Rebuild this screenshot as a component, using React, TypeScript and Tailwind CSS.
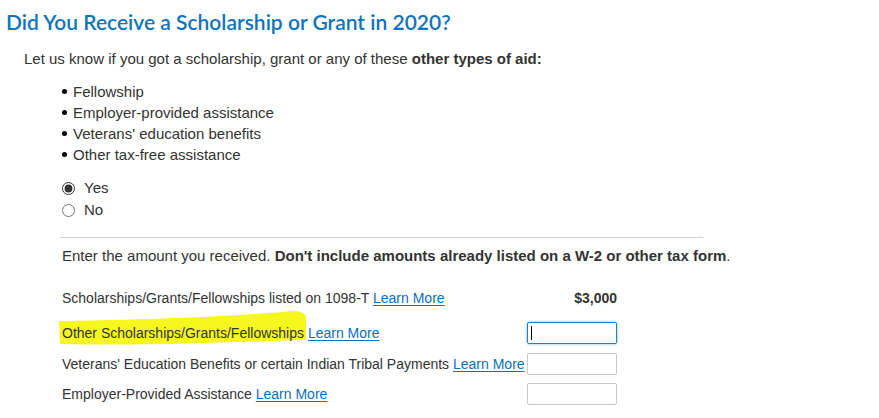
import { useState } from 'react'

const sans = { fontFamily: '"Liberation Sans", Arial, sans-serif' }

function LearnMore() {
  return (
    <a href="#" className="text-[#0a6fc2] underline underline-offset-2 decoration-1">
      Learn More
    </a>
  )
}

function Highlight() {
  return (
    <svg
      className="pointer-events-none absolute left-[-5px] top-[-14px]"
      width="262"
      height="40"
      viewBox="0 0 262 40"
    >
      <path
        d="M2 12 C 60 11, 150 9, 226 3 C 238 1, 247 2, 249 8 L 249 31 C 180 33, 90 37, 3 35 Z"
        fill="#f6f71e"
      />
    </svg>
  )
}

function AmountInput({ focused }: { focused?: boolean }) {
  const [value, setValue] = useState('')
  return (
    <span className="relative">
      <input
        value={value}
        onChange={(e) => setValue(e.target.value)}
        className={
          focused
            ? 'block h-[22px] w-[90px] rounded-[2px] border border-[#1f7fc4] bg-white px-1 text-sm shadow-[0_0_3px_#6fb3e6] outline-none'
            : 'block h-[22px] w-[90px] rounded-[2px] border border-[#c9c9c9] bg-white px-1 text-sm outline-none'
        }
      />
      {focused && value === '' && (
        <span className="pointer-events-none absolute left-[4px] top-[4px] h-[14px] w-px bg-black" />
      )}
    </span>
  )
}

export default function App() {
  const [aid, setAid] = useState<'yes' | 'no'>('yes')

  return (
    <div className="h-[418px] w-[879px] bg-white text-[15px] text-[#333]" style={sans}>
      <h1
        className="pl-[6px] pt-[7px] text-[21px] font-semibold leading-[30px] text-[#0d74bd]"
        style={{ fontFamily: 'Lato, "Open Sans", sans-serif' }}
      >
        Did You Receive a Scholarship or Grant in 2020?
      </h1>

      <p className="mt-[12px] pl-[24px] leading-[20px]">
        Let us know if you got a scholarship, grant or any of these <b>other types of aid:</b>
      </p>

      <ul className="mt-[12px] pl-[62px] leading-[21px]">
        {[
          'Fellowship',
          'Employer-provided assistance',
          "Veterans' education benefits",
          'Other tax-free assistance',
        ].map((t) => (
          <li key={t} className="flex items-center gap-[6px]">
            <span className="inline-block h-[5px] w-[5px] rounded-full bg-black" />
            {t}
          </li>
        ))}
      </ul>

      <div className="ml-[62px] mt-[12px] flex flex-col leading-[22px]">
        {(['yes', 'no'] as const).map((v) => (
          <label key={v} className="flex cursor-pointer items-center gap-[9px]">
            <input
              type="radio"
              name="aid"
              checked={aid === v}
              onChange={() => setAid(v)}
              className="m-0 h-[13px] w-[13px] accent-[#333]"
            />
            {v === 'yes' ? 'Yes' : 'No'}
          </label>
        ))}
      </div>

      <div className="ml-[60px] mt-[16px] w-[643px] border-t border-[#cfcfcf]" />

      <p className="ml-[62px] mt-[8px] leading-[20px]">
        Enter the amount you received.{' '}
        <b>Don't include amounts already listed on a W-2 or other tax form</b>.
      </p>

      <div className="ml-[62px] mt-[22px] flex w-[555px] flex-col text-[14px]">
        <div className="flex h-[20px] items-center justify-between">
          <span>
            Scholarships/Grants/Fellowships listed on 1098-T <LearnMore />
          </span>
          <b>$3,000</b>
        </div>
        <div className="mt-[14px] flex h-[22px] items-center justify-between">
          <span className="relative">
            <Highlight />
            <span className="relative">Other Scholarships/Grants/Fellowships</span> <LearnMore />
          </span>
          <AmountInput focused />
        </div>
        <div className="mt-[9px] flex h-[22px] items-center justify-between">
          <span>
            Veterans' Education Benefits or certain Indian Tribal Payments <LearnMore />
          </span>
          <AmountInput />
        </div>
        <div className="mt-[8px] flex h-[22px] items-center justify-between">
          <span>
            Employer-Provided Assistance <LearnMore />
          </span>
          <AmountInput />
        </div>
      </div>
    </div>
  )
}
